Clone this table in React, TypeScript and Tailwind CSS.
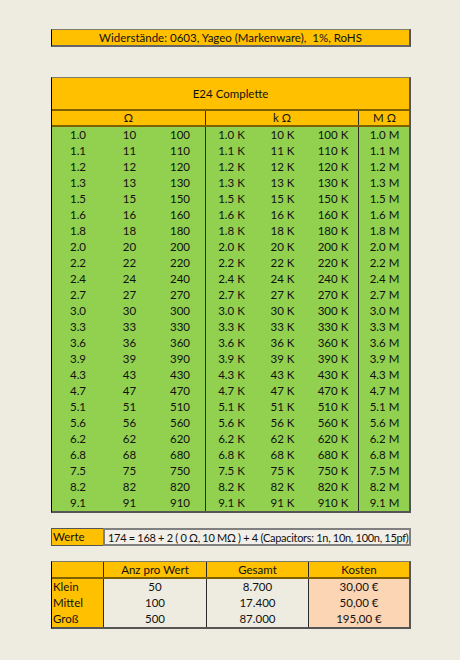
import React from 'react';

const base = ['1.0', '1.1', '1.2', '1.3', '1.5', '1.6', '1.8', '2.0', '2.2', '2.4', '2.7', '3.0', '3.3', '3.6', '3.9', '4.3', '4.7', '5.1', '5.6', '6.2', '6.8', '7.5', '8.2', '9.1'];

const ten = (v: string) => String(Math.round(parseFloat(v) * 10));
const hundred = (v: string) => String(Math.round(parseFloat(v) * 100));

const costs = [
  { label: 'Klein', anz: '50', total: '8.700', cost: '30,00 €' },
  { label: 'Mittel', anz: '100', total: '17.400', cost: '50,00 €' },
  { label: 'Groß', anz: '500', total: '87.000', cost: '195,00 €' },
];

export default function App() {
  return (
    <div
      className="w-[460px] h-[660px] bg-[#eeece1] text-[#111] text-[11px] leading-none overflow-hidden"
      style={{ fontFamily: 'Lato, "Liberation Sans", sans-serif' }}
    >
      <div className="pl-[51px] pt-[29px]">
        {/* Banner */}
        <div className="w-[360px] h-[18px] bg-[#ffc000] border-l border-l-black border-t border-t-[#7d7a6c] border-r-2 border-r-[#555] border-b-2 border-b-[#666] flex items-center justify-center text-[11.5px]">
          Widerstände: 0603, Yageo (Markenware),&nbsp; 1%, RoHS
        </div>

        {/* E24 table */}
        <div className="mt-[30px] w-[360px] border-l border-l-black border-t border-t-[#7d7a6c] border-r-2 border-r-[#555] border-b-2 border-b-[#555] text-[11.5px]">
          <div className="h-[33px] bg-[#ffc000] flex items-center justify-center border-b-2 border-b-[#7f6000]">
            E24 Complette
          </div>
          <div className="grid grid-cols-[154px_153px_51px] h-[16px] bg-[#ffc000] border-b-2 border-b-[#7f6000]">
            <div className="flex items-center justify-center border-r border-r-[#2a2a2a]">Ω</div>
            <div className="flex items-center justify-center border-r border-r-[#2a2a2a]">k Ω</div>
            <div className="flex items-center justify-center">M Ω</div>
          </div>
          <div className="bg-[#92d050]">
            {base.map((v) => (
              <div key={v} className="grid grid-cols-[52px_51px_51px_51px_51px_51px_51px] h-[16px]">
                <div className="flex items-center justify-center">{v}</div>
                <div className="flex items-center justify-center">{ten(v)}</div>
                <div className="flex items-center justify-center border-r border-r-[#2a2a2a]">{hundred(v)}</div>
                <div className="flex items-center justify-center">{v} K</div>
                <div className="flex items-center justify-center">{ten(v)} K</div>
                <div className="flex items-center justify-center border-r border-r-[#2a2a2a]">{hundred(v)} K</div>
                <div className="flex items-center justify-center">{v} M</div>
              </div>
            ))}
          </div>
        </div>

        {/* Werte */}
        <div className="mt-[15px] w-[360px] h-[18px] flex text-[11.5px]">
          <div className="w-[52px] bg-[#ffc000] border border-[#555] border-r-0 flex items-center pl-[1px]">Werte</div>
          <div className="flex-1 bg-[#f1efe8] border-2 border-[#808080] flex items-center pl-[3px] whitespace-nowrap overflow-hidden text-[11px] tracking-[-0.3px]">
            174 = 168 + 2 ( 0 Ω, 10 MΩ ) + 4 (Capacitors: 1n, 10n, 100n, 15pf)
          </div>
        </div>

        {/* Kosten */}
        <div className="mt-[15px] w-[360px] border-l border-l-black border-t border-t-[#7d7a6c] border-r-2 border-r-[#555] border-b-2 border-b-[#555] text-[11.5px]">
          <div className="grid grid-cols-[52px_103px_102px_1fr] h-[17px] bg-[#ffc000] border-b-2 border-b-[#7f6000]">
            <div className="border-r border-r-[#2a2a2a]" />
            <div className="flex items-center justify-center border-r border-r-[#2a2a2a]">Anz pro Wert</div>
            <div className="flex items-center justify-center border-r border-r-[#2a2a2a]">Gesamt</div>
            <div className="flex items-center justify-center">Kosten</div>
          </div>
          {costs.map((c) => (
            <div key={c.label} className="grid grid-cols-[52px_103px_102px_1fr] h-[16px]">
              <div className="bg-[#ffc000] flex items-center pl-[1px] border-r border-r-[#2a2a2a]">{c.label}</div>
              <div className="flex items-center justify-center border-r border-r-[#2a2a2a]">{c.anz}</div>
              <div className="flex items-center justify-center border-r border-r-[#2a2a2a]">{c.total}</div>
              <div className="bg-[#fcd5b4] flex items-center justify-center">{c.cost}</div>
            </div>
          ))}
        </div>
      </div>
    </div>
  );
}
